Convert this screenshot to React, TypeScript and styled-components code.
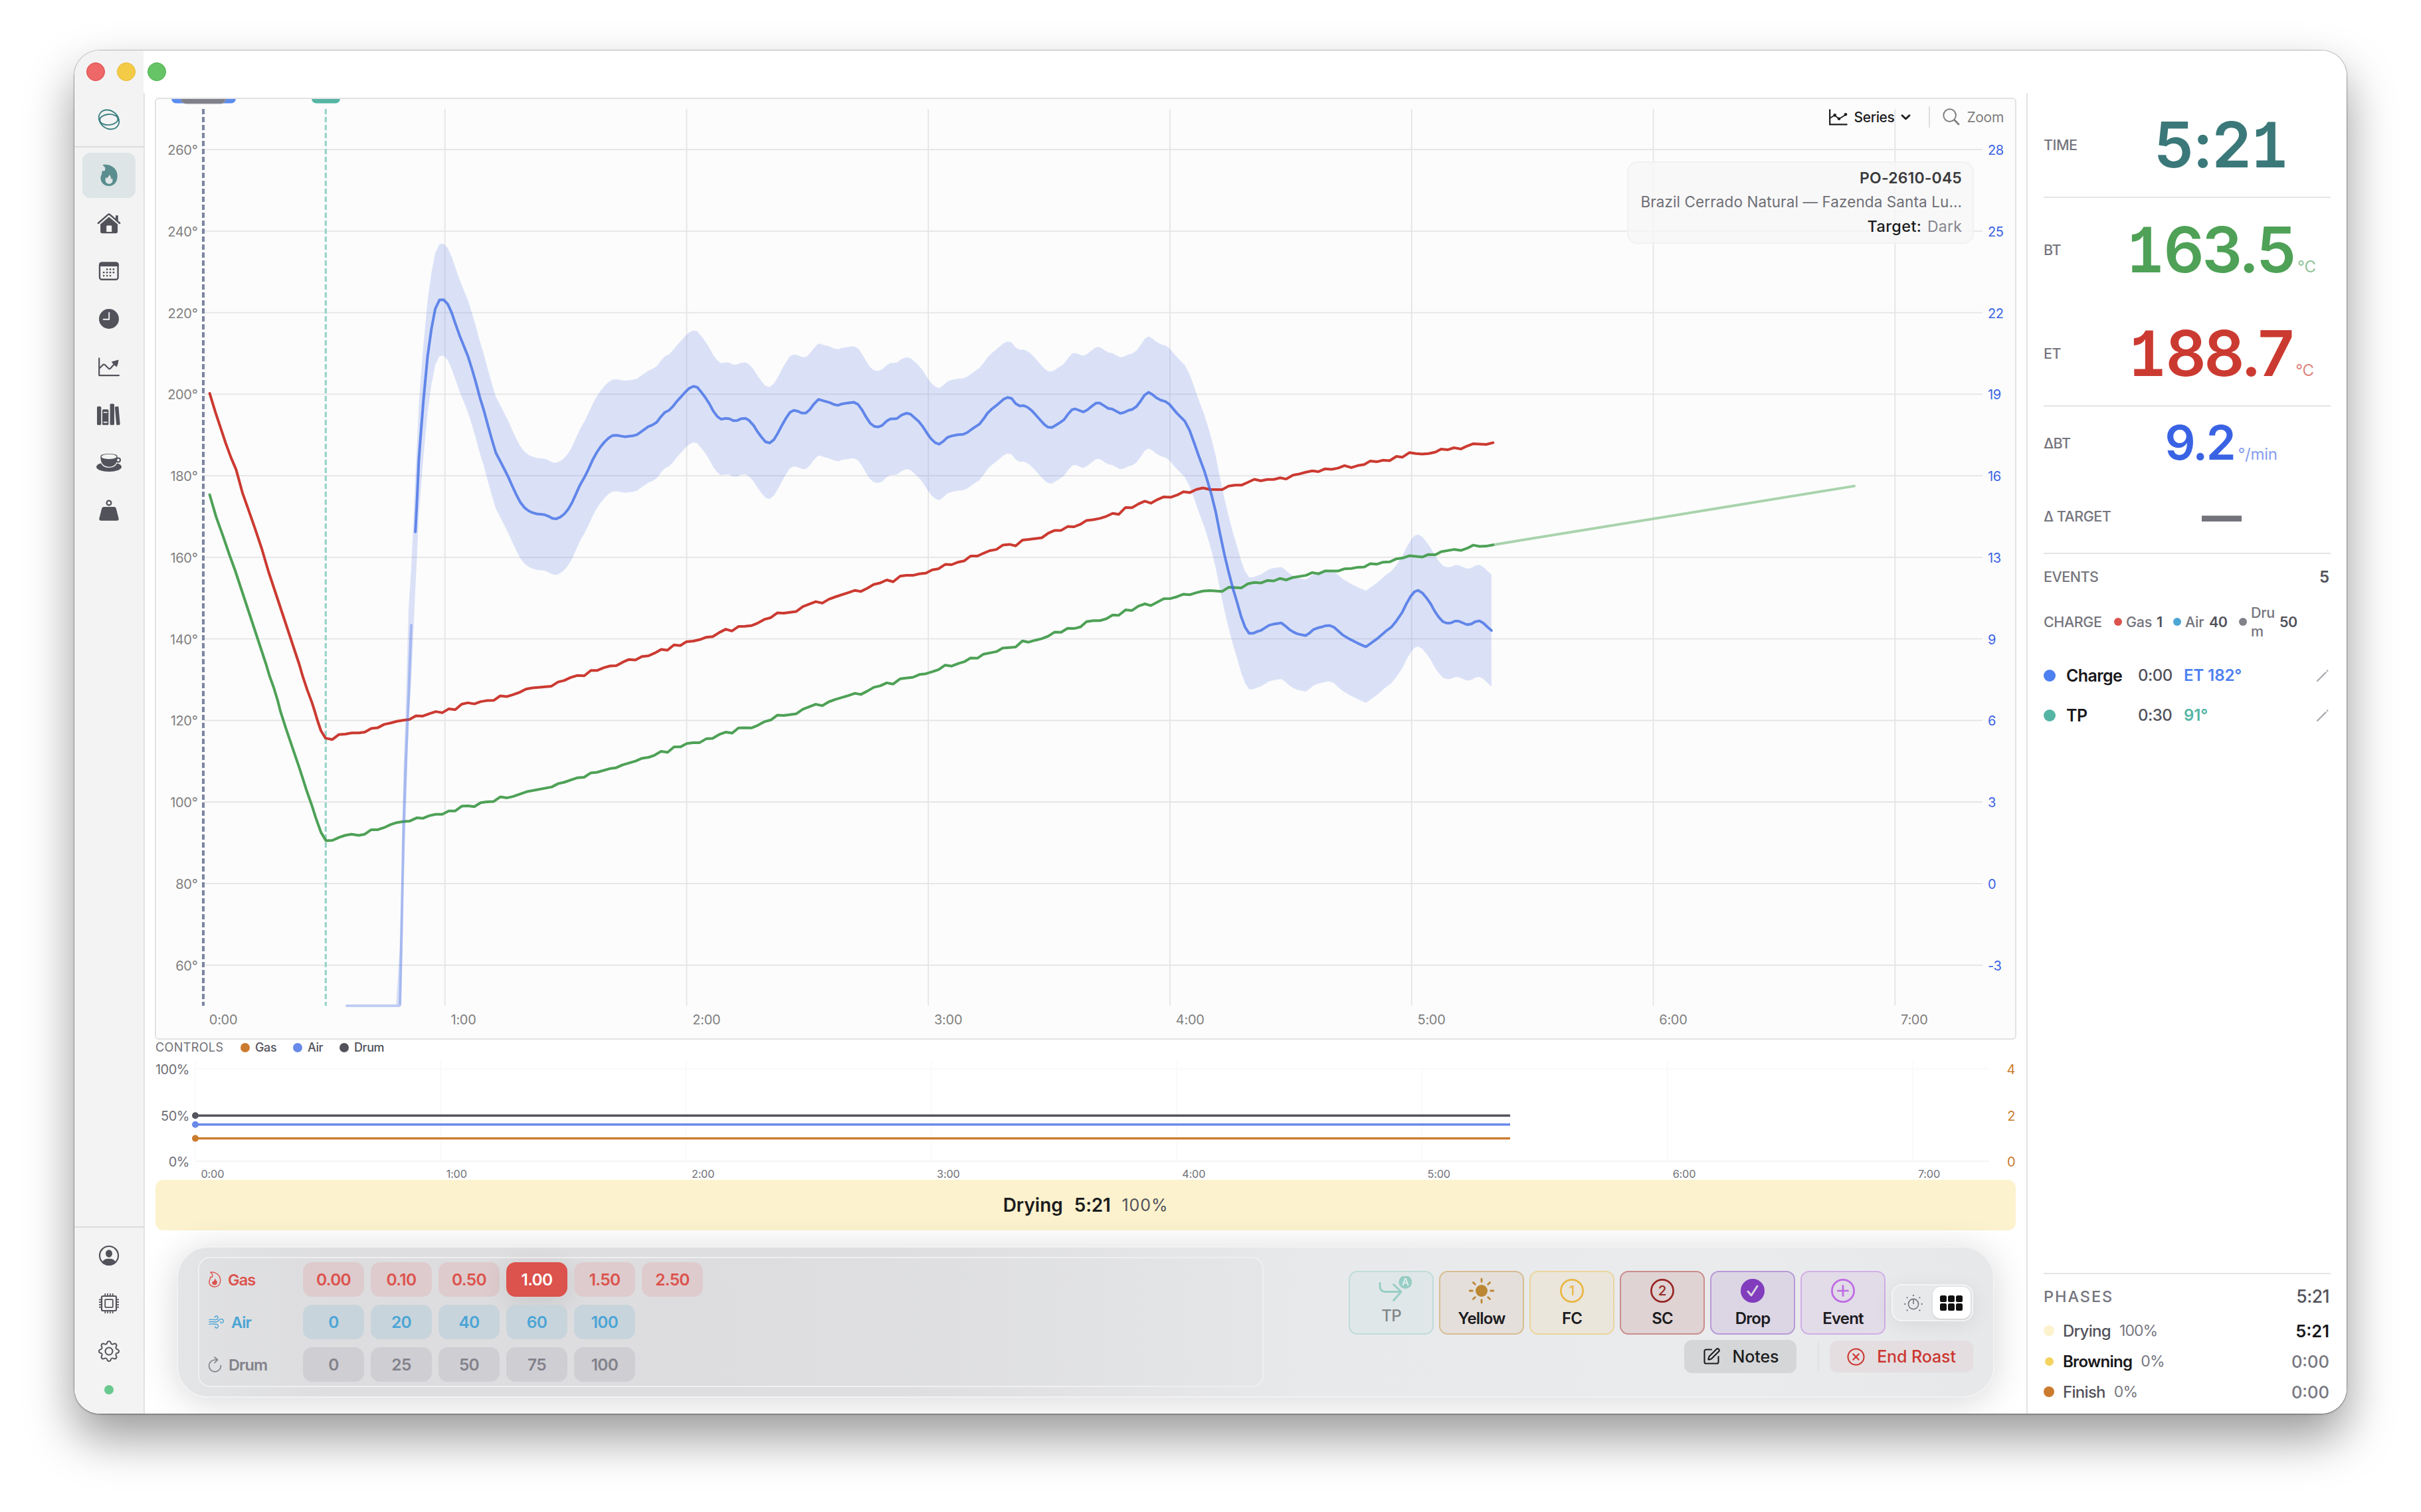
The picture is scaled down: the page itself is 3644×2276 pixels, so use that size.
import React from "react";
import styled, { createGlobalStyle } from "styled-components";
import { BsGear } from "react-icons/bs";
import { SquarePen } from "lucide-react";

const ui = `Inter, "Liberation Sans", sans-serif`;

const Global = createGlobalStyle`
  * { box-sizing: border-box; }
  body { margin: 0; background: #fff; font-family: ${ui}; color: #1c1c1e; overflow: hidden; }
  svg { display: block; }
  svg text { font-family: ${ui}; }
`;

/* ---------- window ---------- */
const Desktop = styled.div`
  width: 3644px;
  height: 2276px;
  padding: 76px 112px 0;
  background: #fff;
`;
const Window = styled.div`
  position: relative;
  display: flex;
  width: 3420px;
  height: 2052px;
  border-radius: 38px;
  overflow: hidden;
  background: #fff;
`;
const WindowShadow = styled.div`
  width: 3420px;
  border-radius: 38px;
  box-shadow: 0 0 0 1px rgba(0, 0, 0, 0.2), 0 1px 3px rgba(0, 0, 0, 0.3), 0 36px 72px rgba(0, 0, 0, 0.4);
`;
const Lights = styled.div`
  position: absolute;
  top: 18px;
  left: 18px;
  display: flex;
  gap: 18px;
`;
const Light = styled.i<{ $c: string; $b: string }>`
  width: 28px;
  height: 28px;
  border-radius: 50%;
  background: ${(p) => p.$c};
  border: 1px solid ${(p) => p.$b};
`;

/* ---------- sidebar ---------- */
const Side = styled.aside`
  display: flex;
  flex-direction: column;
  width: 106px;
`;
const SideCap = styled.div`
  width: 104px;
  height: 64px;
  background: #f3f3f3;
`;
const SideBody = styled.div`
  flex: 1;
  display: flex;
  flex-direction: column;
  background: #f3f3f3;
  border-right: 2px solid #e3e3e4;
`;
const Brand = styled.div`
  height: 82px;
  display: flex;
  align-items: center;
  justify-content: center;
  border-bottom: 2px solid #dcdcdd;
`;
const Nav = styled.nav`
  display: flex;
  flex-direction: column;
  align-items: center;
  gap: 4px;
  padding-top: 8px;
`;
const NavItem = styled.div<{ $on?: boolean }>`
  display: flex;
  align-items: center;
  justify-content: center;
  width: 80px;
  height: 68px;
  border-radius: 12px;
  color: ${(p) => (p.$on ? "#598d8e" : "#52525b")};
  background: ${(p) => (p.$on ? "#dde5e6" : "transparent")};
`;
const NavFoot = styled(Nav)`
  margin-top: auto;
  height: 282px;
  border-top: 2px solid #dcdcdd;
`;
const Status = styled.i`
  width: 14px;
  height: 14px;
  margin-top: 13px;
  border-radius: 50%;
  background: #68c98e;
`;

/* ---------- main ---------- */
const Main = styled.main`
  display: flex;
  flex-direction: column;
  width: 2832px;
  padding: 71px 15px 0;
`;
const Panel = styled.section`
  position: relative;
  height: 1418px;
  border: 2px solid #e3e3e3;
  border-radius: 6px;
  background: #fcfcfc;
  overflow: hidden;
`;
const Tools = styled.div`
  position: absolute;
  top: 11px;
  right: 17px;
  height: 32px;
  display: flex;
  align-items: center;
  font-size: 21px;
`;
const SeriesBtn = styled.div`
  display: flex;
  align-items: center;
  gap: 10px;
  padding-right: 27px;
  font-weight: 500;
  letter-spacing: -0.4px;
  color: #1c1c1e;
`;
const ZoomBtn = styled.div`
  display: flex;
  align-items: center;
  gap: 10px;
  height: 32px;
  padding-left: 19px;
  border-left: 2px solid #dedee0;
  letter-spacing: -0.3px;
  color: #7f7f7f;
`;
const OrderCard = styled.div`
  position: absolute;
  top: 94px;
  right: 62px;
  width: 522px;
  height: 124px;
  padding: 5px 16px;
  border: 2px solid #f1f1f2;
  border-radius: 16px;
  background: rgba(246, 246, 247, 0.82);
  text-align: right;
  line-height: 37px;
  white-space: nowrap;
`;
const OrderNo = styled.div`
  font-size: 23px;
  font-weight: 600;
  letter-spacing: 0.15px;
  line-height: 36px;
  color: #3a3a3c;
`;
const OrderName = styled.div`
  font-size: 22.5px;
  letter-spacing: 0.1px;
  line-height: 36px;
  color: #6e6e76;
`;
const OrderTarget = styled.div`
  font-size: 23.5px;
  font-weight: 500;
  letter-spacing: 0.4px;
  line-height: 38px;
  color: #1c1c1e;
  span { font-weight: 400; font-size: 23px; letter-spacing: 0.2px; color: #85858d; margin-left: 2px; }
`;

const Legend = styled.div`
  display: flex;
  align-items: center;
  height: 23px;
  font-size: 18px;
  font-weight: 500;
  color: #52525b;
`;
const LegendTitle = styled.span`
  width: 129px;
  padding-left: 1px;
  letter-spacing: 0.4px;
  color: #6f6f77;
  font-weight: 400;
`;
const LegendItem = styled.span<{ $c: string; $w: number }>`
  display: flex;
  align-items: center;
  gap: 8px;
  width: ${(p) => p.$w}px;
  letter-spacing: -0.4px;
  &::before { content: ""; width: 14px; height: 14px; border-radius: 50%; background: ${(p) => p.$c}; }
`;
const PhaseBar = styled.div`
  display: flex;
  align-items: center;
  justify-content: center;
  height: 76px;
  margin: 0 1px;
  border-radius: 12px;
  background: #fcf2cd;
  font-size: 28px;
  font-weight: 600;
  gap: 17px;
  b { font-weight: 600; letter-spacing: -0.3px; }
  small { font-size: 25px; font-weight: 400; letter-spacing: 0.9px; color: #52525b; }
`;

/* ---------- dock ---------- */
const Dock = styled.section`
  position: relative;
  display: flex;
  justify-content: space-between;
  height: 228px;
  margin: 24px 33px 0;
  padding: 14px 30px 0 30px;
  border: 2px solid #f2f2f3;
  border-radius: 48px;
  background: linear-gradient(90deg, #e3e5e7 0%, #dedee0 8%, #dedee0 40%, #e8e9eb 62%, #eaebed 85%, #e6e8ea 100%);
  box-shadow: 0 6px 54px rgba(0, 0, 0, 0.16);
`;
const Sliders = styled.div`
  display: flex;
  flex-direction: column;
  gap: 12px;
  width: 1604px;
  height: 196px;
  padding: 6px 14px;
  border: 2px solid #efeff0;
  border-radius: 18px;
  background: linear-gradient(90deg, rgba(221, 221, 223, 0.4), rgba(221, 221, 223, 0.9) 15%, rgba(221, 221, 223, 0.9) 50%, rgba(228, 229, 231, 0.7));
`;
const SliderRow = styled.div<{ $c: string }>`
  display: flex;
  align-items: center;
  gap: 10px;
  height: 52px;
  color: ${(p) => p.$c};
`;
const SliderName = styled.div`
  display: flex;
  align-items: center;
  gap: 10px;
  width: 132px;
  font-size: 23.5px;
  font-weight: 600;
  letter-spacing: -0.9px;
`;
const Chip = styled.div<{ $bg: string; $on?: boolean }>`
  display: flex;
  align-items: center;
  justify-content: center;
  width: 92px;
  height: 52px;
  border-radius: 14px;
  font-size: 24.5px;
  font-weight: 600;
  letter-spacing: -0.7px;
  background: ${(p) => (p.$on ? "#dc524c" : p.$bg)};
  color: ${(p) => (p.$on ? "#fff" : "inherit")};
  box-shadow: ${(p) => (p.$on ? "0 8px 40px rgba(0,0,0,.1)" : "none")};
`;
const Actions = styled.div`
  display: flex;
  flex-direction: column;
  gap: 8px;
  padding-top: 21px;
`;
const ActionRow = styled.div`
  display: flex;
  align-items: center;
  justify-content: flex-end;
`;
const EventBtn = styled.div<{ $bg: string; $b: string; $dim?: boolean }>`
  display: flex;
  flex-direction: column;
  align-items: center;
  width: 128px;
  height: 96px;
  margin-right: 8px;
  padding-top: 6px;
  border: 2px solid ${(p) => p.$b};
  border-radius: 13px;
  background: ${(p) => p.$bg};
  font-size: 24px;
  font-weight: ${(p) => (p.$dim ? 500 : 600)};
  line-height: ${(p) => (p.$dim ? 31 : 39)}px;
  letter-spacing: -0.8px;
  color: ${(p) => (p.$dim ? "#808588" : "#1c1c1e")};
`;
const Toggle = styled.div`
  display: flex;
  width: 123px;
  height: 56px;
  margin-left: 1px;
  padding: 2px;
  border: 2px solid #f4f4f5;
  border-radius: 16px;
  box-shadow: 0 6px 30px rgba(0, 0, 0, 0.07);
`;
const ToggleCell = styled.div<{ $on?: boolean }>`
  display: flex;
  align-items: center;
  justify-content: center;
  width: 58px;
  height: 48px;
  border-radius: 12px;
  background: ${(p) => (p.$on ? "#fff" : "transparent")};
  box-shadow: ${(p) => (p.$on ? "0 1px 3px rgba(0,0,0,.15)" : "none")};
`;
const Knobs = styled.div`
  display: grid;
  grid-template-columns: repeat(3, 10px);
  gap: 2px;
  i { height: 10.5px; border-radius: 2.5px; background: #111; }
`;
const TextBtn = styled.div<{ $bg: string; $c: string; $w: number; $h: number }>`
  display: flex;
  align-items: center;
  justify-content: center;
  gap: 18px;
  width: ${(p) => p.$w}px;
  height: ${(p) => p.$h}px;
  border-radius: 12px;
  background: ${(p) => p.$bg};
  color: ${(p) => p.$c};
  font-size: 25px;
  font-weight: 500;
  letter-spacing: -0.1px;
  white-space: nowrap;
`;
const Rule = styled.i`
  width: 2px;
  height: 44px;
  margin: 0 16px 0 32px;
  background: #e0e1e3;
`;

/* ---------- readouts ---------- */
const Readouts = styled.aside`
  width: 482px;
  padding-top: 64px;
  display: flex;
`;
const ReadBody = styled.div`
  flex: 1;
  display: flex;
  flex-direction: column;
  padding: 0 24px;
  border-left: 2px solid #e3e3e4;
`;
const Group = styled.div<{ $h: number }>`
  height: ${(p) => p.$h}px;
  border-bottom: 2px solid #e4e4e6;
`;
const Reading = styled.div<{ $h: number }>`
  display: flex;
  align-items: center;
  height: ${(p) => p.$h}px;
`;
const Cap = styled.span`
  width: 104px;
  font-size: 21.5px;
  font-weight: 500;
  letter-spacing: -0.5px;
  color: #75757d;
  white-space: nowrap;
`;
const ValueBox = styled.div<{ $c: string; $size: number; $track?: number }>`
  flex: 1;
  display: flex;
  align-items: baseline;
  justify-content: center;
  padding: 0 2px 2px 0;
  font-size: ${(p) => p.$size}px;
  line-height: 1;
  font-weight: 600;
  letter-spacing: ${(p) => p.$track ?? -0.032}em;
  color: ${(p) => p.$c};
  small { font-size: 24px; font-weight: 400; letter-spacing: -0.3px; opacity: 0.62; margin-left: 5px; }
`;
const SlabOne = styled.span`
  display: inline-block;
  font-family: "Liberation Mono", monospace;
  font-weight: 700;
  font-size: 1.09em;
  line-height: 0;
  letter-spacing: 0;
  margin: 0 -0.03em 0 -0.025em;
  transform: scaleX(0.84);
`;
const HeadRow = styled.div<{ $h: number }>`
  display: flex;
  align-items: center;
  justify-content: space-between;
  height: ${(p) => p.$h}px;
  padding-right: 2px;
  font-size: 24px;
  font-weight: 600;
  color: #52525b;
`;
const ChargeRow = styled.div`
  display: flex;
  align-items: center;
  height: 66px;
  padding-top: 2px;
  font-size: 21.5px;
  color: #75757d;
  letter-spacing: -0.3px;
  margin-bottom: 18px;
`;
const ChargeCap = styled.span`
  width: 106px;
  font-weight: 500;
  font-size: 21.5px;
  letter-spacing: -0.4px;
`;
const Setting = styled.span<{ $c: string; $w: number; $t: number }>`
  display: flex;
  align-items: center;
  width: ${(p) => p.$w}px;
  line-height: 28px;
  font-weight: 500;
  &::before { content: ""; flex: none; width: 12px; height: 12px; margin-right: 6px; border-radius: 50%; background: ${(p) => p.$c}; }
  span { width: ${(p) => p.$t}px; word-break: break-all; }
  b { font-weight: 600; letter-spacing: -0.6px; color: #52525b; }
`;
const EventRow = styled.div<{ $c: string }>`
  display: flex;
  align-items: center;
  height: 60px;
  padding: 1px 3px 0 0;
  font-size: 24px;
  &::before { content: ""; width: 18px; height: 18px; margin-right: 16px; border-radius: 50%; background: ${(p) => p.$c}; }
  b { width: 108px; font-size: 25px; font-weight: 600; letter-spacing: -0.6px; color: #18181b; }
  span { width: 69px; font-weight: 500; letter-spacing: -0.5px; color: #52525b; }
  em { flex: 1; font-style: normal; font-weight: 600; letter-spacing: -0.1px; color: ${(p) => p.$c}; }
`;
const Phases = styled.div`
  margin-top: auto;
  height: 212px;
  border-top: 2px solid #e4e4e6;
`;
const PhaseHead = styled(HeadRow)`
  padding-top: 4px;
`;
const PhaseCap = styled.span`
  font-size: 23.5px;
  font-weight: 500;
  letter-spacing: 1.9px;
  color: #75757d;
`;
const PhaseTotal = styled.span`
  font-size: 26.5px;
  font-weight: 500;
  letter-spacing: -0.5px;
`;
const PhaseRow = styled.div<{ $c: string; $d: number; $on?: boolean; $lead?: boolean }>`
  display: flex;
  align-items: center;
  height: 46px;
  padding-right: 2px;
  font-size: 24px;
  &::before {
    content: "";
    width: ${(p) => p.$d}px;
    height: ${(p) => p.$d}px;
    margin: 0 ${(p) => 13 + (16 - p.$d) / 2}px 0 ${(p) => (16 - p.$d) / 2}px;
    border-radius: 50%;
    background: ${(p) => p.$c};
  }
  b { font-weight: ${(p) => (p.$on ? 600 : 500)}; letter-spacing: -0.7px; color: ${(p) => (p.$on ? "#18181b" : "#52525b")}; }
  span { flex: 1; margin-left: 13px; font-size: 23px; letter-spacing: -0.9px; color: #77777f; }
  em { font-style: normal; font-size: 25.5px; font-weight: ${(p) => (p.$lead ? 600 : 500)}; letter-spacing: 0; color: ${(p) => (p.$lead ? "#18181b" : "#77777f")}; }
`;

/* ---------- series data ---------- */
type Tile = { ox: number; oy: number; sx: number; sy: number; d: string };
type Pt = [number, number];
const A = { ox: 100, oy: 60, sx: 2.24, sy: 1.96 };
const B = { ox: 230, oy: 1000, sx: 1.7422, sy: 2.8 };
const C = { ox: 480, oy: 340, sx: 1.7422, sy: 2.24 };
const D = { ox: 1350, oy: 480, sx: 1.6505, sy: 2.6133 };

const decode = (tiles: Tile[]): Pt[] =>
  tiles.flatMap((t) =>
    t.d.trim().split(/\s+/).map((p) => {
      const [x, y] = p.split(",").map(Number);
      return [t.ox + x / t.sx, t.oy + y / t.sy] as Pt;
    })
  );
const poly = (pts: Pt[]) => pts.map(([x, y]) => `${x.toFixed(1)},${y.toFixed(1)}`).join(" ");

const et = decode([
  { ...A, d: "483,1043 502,1098 520,1145 537,1190 555,1233 572,1268 583,1303 594,1338 612,1382 635,1440 658,1500 681,1568" },
  { ...B, d: "384,0 393,50 405,108 417,160 424,195 432,238 441,280 453,311 471,317 488,296 505,294 522,289 540,289 556,286 573,270 590,267 607,253 624,247 640,240 656,236 673,232 690,217 708,218 725,208 742,199 759,204 776,188 793,191 810,168 826,162 843,167 860,157 876,153 894,152 911,133 928,136 945,128 962,118" },
  { ...C, d: "543,1562 560,1558 610,1552 627,1538 643,1533 660,1523 677,1516 696,1517 713,1499 730,1499 747,1490 763,1484 780,1483 797,1471 813,1462 830,1464 847,1452 864,1450 881,1440 898,1428 914,1431 931,1413 948,1415 964,1402 982,1400 999,1395 1016,1387 1033,1385 1050,1371 1067,1360 1083,1366 1100,1351 1117,1350 1134,1348 1151,1339 1168,1327 1185,1321 1202,1305 1219,1306 1235,1303 1252,1300 1269,1284 1287,1275 1303,1267 1320,1272 1337,1259 1354,1251 1388,1237 1406,1229 1421,1233 1438,1222 1455,1209 1472,1204 1489,1194 1506,1200" },
  { ...D, d: "8,1012 24,1009 40,1009 56,1003 72,1000 88,987 103,983 120,966 136,967 152,957 167,952 183,933 200,933 215,922 230,912 247,907 263,890 280,887 295,893 312,870 327,868 360,861 376,843 392,832 408,832 424,817 440,818 456,808 471,793 488,790 504,785 520,777 536,765 551,769 568,742 584,743 600,728 616,717 631,725 647,711 663,700 680,702 696,693 712,680 728,683 744,671 760,665 777,671 808,672 824,658 840,654 856,654 872,643 888,631 904,637 920,632 936,632 952,625 967,630 984,615 1000,610 1016,603 1032,598 1047,601 1063,590 1080,592 1096,587 1112,577 1129,585 1145,577 1161,573 1176,559 1192,562 1208,556 1224,558 1241,541 1256,544 1273,526 1289,530 1305,532 1321,530 1338,524 1352,512 1368,515 1384,507 1401,512 1417,500 1432,491 1464,494 1481,487" },
]);
const bt = decode([
  { ...A, d: "483,1342 505,1408 527,1462 549,1518 569,1566" },
  { ...B, d: "297,0 306,48 317,98 327,150 335,200 350,275 367,355 385,440 403,530 417,595 427,645 441,708 454,743 471,742 488,730 504,721 521,716 540,721 556,716 573,697 590,697 607,688 624,675 640,667 656,663 673,661 692,647 708,649 725,638 742,632 759,632 776,618 793,618 810,598 826,596 843,600 860,583 876,580 894,578 911,559 928,563 945,557 980,537 1046,517 1063,503 1079,497 1114,478 1131,476 1148,458 1165,455 1198,440 1215,436 1232,424 1266,408 1283,396 1300,392 1315,384 1333,367 1350,371 1367,348 1384,348 1400,334 1416,330 1434,330 1451,314 1468,312 1485,296 1502,286 1519,290 1536,268 1553,267" },
  { ...C, d: "1134,1693 1151,1684 1168,1672 1185,1666 1202,1650 1219,1651 1235,1648 1252,1645 1269,1630 1287,1621 1303,1613 1320,1618 1337,1605 1354,1597 1388,1584 1406,1576 1421,1580 1438,1569 1455,1556 1472,1551 1489,1541 1506,1545" },
  { ...D, d: "8,1416 40,1410 56,1399 72,1396 88,1388 103,1380 120,1362 136,1366 152,1356 167,1349 183,1334 200,1335 215,1319 247,1309 263,1295 295,1291 312,1267 327,1272 344,1264 360,1258 376,1248 392,1232 408,1233 424,1217 440,1218 456,1212 471,1191 488,1187 504,1187 520,1180 536,1165 551,1166 568,1145 584,1147 600,1130 616,1121 631,1128 663,1101 680,1100 696,1093 712,1083 728,1085 744,1077 760,1071 777,1069 808,1072 824,1056 856,1058 872,1042 888,1037 904,1039 920,1029 936,1031 952,1021 967,1027 984,1017 1016,1009 1032,998 1047,1003 1063,992 1096,992 1112,983 1129,982 1145,977 1161,976 1176,963 1192,965 1208,957 1224,956 1241,944 1256,941 1273,932 1305,937 1320,927 1338,928 1352,916 1384,907 1401,911 1417,902 1432,890 1448,895 1464,894 1481,889" },
]);
const ror = decode([
  { ...C, d: "253,1032 258,905 262,790 266,720 274,590 285,440 295,348 305,280 316,250 327,249 338,264 348,292 358,330 369,370 380,405 391,440 402,485 412,530 422,578 432,620 443,672 453,718 464,765 475,792 487,822 497,848 507,877 517,905 528,932 539,950 550,961 560,967 571,971 592,974 602,979 612,986 622,988 633,982 644,971 654,955 664,933 674,904 685,873 697,846 707,820 718,789 728,765 739,744 750,727 760,715 770,707 781,706 802,711 823,708 834,704 844,695 864,677 875,671 886,662 896,645 907,629 918,622 928,609 939,591 952,573 961,560 971,548 982,541 992,544 1003,561 1013,578 1024,600 1034,624 1045,643 1055,652 1066,649 1076,650 1087,657 1097,656 1108,650 1119,649 1129,657 1140,673 1150,694 1161,713 1171,728 1182,732 1193,721 1203,700 1214,673 1224,650 1235,629 1245,622 1256,625 1266,631 1277,631 1287,620 1298,601 1310,585 1340,596 1350,602 1361,605 1372,600 1382,598 1403,595 1414,602 1424,620 1435,645 1446,666 1456,676 1467,678 1477,673 1489,658 1499,651 1509,651" },
  { ...D, d: "0,392 12,378 24,371 34,375 44,389 54,403 64,423 75,450 85,472 95,487 105,493 115,482 125,467 135,461 150,456 165,454 175,447 187,433 205,414 215,394 225,371 236,354 246,342 265,316 275,309 285,313 295,333 305,342 315,341 325,348 335,361 345,378 355,396 366,415 375,426 385,427 395,418 405,408 415,397 425,375 435,357 443,354 463,366 473,358 484,344 495,331 504,331 515,342 525,352 535,355 555,372 565,368 575,360 585,356 595,345 605,324 615,300 625,289 635,298 645,311 656,320 667,325 677,336 695,370 715,402 727,438 739,490 750,540 763,595 772,640 782,695 792,760 802,840 814,930 824,995 835,1062 845,1115 855,1170 865,1213 875,1237 885,1237 895,1230 905,1225 915,1215 925,1205 935,1201 955,1196 965,1208 975,1222 985,1232 995,1239 1015,1246 1025,1236 1035,1222 1045,1216 1055,1212 1065,1207 1075,1206 1085,1212 1095,1226 1107,1243 1125,1260 1145,1276 1165,1290 1175,1279 1195,1256 1215,1228 1228,1213 1240,1190 1255,1155 1267,1117 1277,1090 1286,1073 1295,1068 1306,1079 1316,1098 1326,1121 1336,1150 1346,1173 1356,1191 1366,1197 1376,1196 1386,1189 1396,1189 1407,1197 1417,1203 1427,1200 1437,1191 1447,1188 1457,1197 1467,1212 1477,1226" },
]);
const rorWarmup: Pt[] = [[601.5, 1514], [604.5, 1400], [607.5, 1240], [611, 1143], [615, 1000], [619, 940]];
const rorAll: Pt[] = [[596, 1598], ...rorWarmup, ...ror];
const SPREAD = 84.3;
const band: Pt[] = [
  ...rorAll.map(([x, y]) => [x, y - SPREAD] as Pt),
  ...rorAll.map(([x, y]) => [x, y + SPREAD] as Pt).reverse(),
];

/* ---------- main chart ---------- */
const yT = (t: number) => 1452.8 + (60 - t) * 6.1385;
const xM = (m: number) => 306 + m * 363.75;
const temps = [260, 240, 220, 200, 180, 160, 140, 120, 100, 80, 60];
const rates = [28, 25, 22, 19, 16, 13, 9, 6, 3, 0, -3];
const minutes = [0, 1, 2, 3, 4, 5, 6, 7];

const RoastChart = () => (
  <svg width="2798" height="1414" viewBox="235 149 2798 1414">
    <defs>
      <clipPath id="plot"><rect x="306" y="163" width="2678" height="1351" /></clipPath>
    </defs>
    <g stroke="#e5e5e6" strokeWidth="1.8">
      {temps.map((t) => <line key={t} x1="306" x2="2984" y1={yT(t)} y2={yT(t)} />)}
      {minutes.slice(1).map((m) => <line key={m} x1={xM(m)} x2={xM(m)} y1="164" y2="1514" />)}
    </g>
    <polygon points={poly(band)} fill="#4169e1" fillOpacity="0.18" clipPath="url(#plot)" />
    <line x1="306" x2="306" y1="164" y2="1514" stroke="#7b86a0" strokeWidth="4" strokeDasharray="8 4" />
    <line x1="490.3" x2="490.3" y1="164" y2="1514" stroke="#97d3c9" strokeWidth="3.2" strokeDasharray="8 4" />
    <g fill="none" strokeLinejoin="round" strokeLinecap="round" strokeWidth="4">
      <line x1="2247" y1="820.2" x2="2791" y2="731.6" stroke="#a9d3ad" />
      <polyline points={poly(et)} stroke="#cb3a31" />
      <polyline points={poly(bt)} stroke="#4ea156" />
      <polyline points={poly(ror)} stroke="#3f6be6" strokeOpacity="0.78" />
      <polyline points={poly([[602, 1512], ...rorWarmup.slice(1, 4), [615, 1050], [619, 941]])} stroke="#4169e1" strokeOpacity="0.34" />
      <line x1="522" x2="601" y1="1514" y2="1514" stroke="#bfcdf4" />
    </g>
    <rect x="258" y="135" width="97" height="20.5" rx="7" fill="#5b8def" />
    <rect x="272" y="135" width="68" height="21" rx="8" fill="#80808a" stroke="#9c9ca6" strokeWidth="1" />
    <rect x="469" y="135" width="43" height="20.5" rx="7" fill="#55b5a5" />
    <g fontSize="20" fill="#808080" letterSpacing="-0.3">
      {temps.map((t) => <text key={t} x="297.5" y={yT(t) + 8} textAnchor="end">{t}°</text>)}
      {minutes.map((m) => <text key={m} x={xM(m) + 8.8} y="1542">{m}:00</text>)}
    </g>
    <g fontSize="20" fill="#3a63e4" letterSpacing="-0.4">
      {rates.map((r, i) => <text key={r} x="2992" y={yT(temps[i]) + 8}>{r}</text>)}
    </g>
  </svg>
);

const ControlsChart = () => {
  const rows: [number, string, string][] = [[1609, "100%", "4"], [1679, "50%", "2"], [1748, "0%", "0"]];
  const lines: [number, string][] = [[1679.3, "#55555d"], [1692.7, "#698aea"], [1713.6, "#cb7b2e"]];
  return (
    <svg width="2802" height="188" viewBox="233 1588 2802 188">
      <g stroke="#f9f9fa" strokeWidth="1.5">
        <line x1="294" x2="2994" y1="1609" y2="1609" />
        <line x1="294" x2="2994" y1="1748" y2="1748" stroke="#f0f0f1" />
        {minutes.map((m) => <line key={m} x1={294 + m * 369.3} x2={294 + m * 369.3} y1="1596" y2="1748" />)}
      </g>
      {lines.map(([y, c]) => (
        <g key={c}>
          <line x1="294" x2="2273" y1={y} y2={y} stroke={c} strokeWidth="3.4" />
          <circle cx="294" cy={y} r="5" fill={c} />
        </g>
      ))}
      <g fontSize="20" letterSpacing="-0.5">
        {rows.map(([y, l, r]) => (
          <React.Fragment key={l}>
            <text x="285" y={y + 8} textAnchor="end" fill="#6f6f77">{l}</text>
            <text x="3033" y={y + 8} textAnchor="end" fill="#cb7b2e">{r}</text>
          </React.Fragment>
        ))}
      </g>
      <g fontSize="16.3" letterSpacing="-0.2" fill="#6f6f77">
        {minutes.map((m) => <text key={m} x={302.5 + m * 369.2} y="1773">{m}:00</text>)}
      </g>
    </svg>
  );
};

/* ---------- icons ---------- */
const Glyph = ({ children, size = 40 }: { children: React.ReactNode; size?: number }) => (
  <svg width={size} height={size} viewBox="0 0 40 40" fill="none">{children}</svg>
);
const LogoIcon = () => (
  <Glyph>
    <g stroke="#3b7f80" strokeWidth="1.9">
      <ellipse cx="20" cy="20" rx="16.3" ry="13.2" transform="rotate(38 20 20)" />
      <ellipse cx="19.8" cy="20" rx="13.6" ry="8.1" transform="rotate(-4 20 20)" />
    </g>
  </Glyph>
);
const FlameIcon = () => (
  <Glyph>
    <path fill="currentColor" fillRule="evenodd" d="M11.5 3.9C20 2.6 32.7 7.6 32.7 20.8C32.7 29.8 28 36 20 36C12.3 36 7.4 30.6 7.4 23.6C7.4 20.6 9.6 18.5 9.3 15.6C9.2 14.4 10 13.2 11 12.7C11.6 14 12.6 13.9 13.3 13.2C14.9 11 15.3 7.4 11.3 5.4C10.6 5 10.7 4 11.5 3.9ZM20.6 19C20.5 21.5 17.7 22.7 16.7 24.5C16 23.6 16 23.2 15.6 23C13.6 26 14 32.6 20.2 32.9C25.6 32.8 26.6 27.4 24.6 24.2C24 25 23.6 25.4 23 25.5C23 23 22.6 20.6 20.6 19Z" />
  </Glyph>
);
const HouseIcon = () => (
  <Glyph>
    <path d="M3.8 20 18.8 6.9Q20 6 21.2 6.9L36.2 20" stroke="currentColor" strokeWidth="2.5" strokeLinecap="round" />
    <path d="M30 8.2h3.8v8.6L30 13.5z" fill="currentColor" />
    <path fillRule="evenodd" d="M20 10.4 33.1 21.6V32.5Q33.1 35.3 30.3 35.3H9.9Q7.1 35.3 7.1 32.5V21.6ZM16.2 24.6V33H24.2V24.6Q24.2 23.6 23.2 23.6H17.2Q16.2 23.6 16.2 24.6Z" fill="currentColor" />
  </Glyph>
);
const CalendarIcon = () => (
  <Glyph>
    <rect x="6" y="7.8" width="27.6" height="25" rx="3.4" stroke="currentColor" strokeWidth="2.4" />
    <path d="M5 13V10.4Q5 6.6 8.8 6.6H31Q34.8 6.6 34.8 10.4V13z" fill="currentColor" />
    {[[17.1, 17.4], [22, 17.4], [26.9, 17.4], [12.2, 22.2], [17.1, 22.2], [22, 22.2], [26.9, 22.2], [12.2, 27.1], [17.1, 27.1], [22, 27.1]].map(([x, y]) => (
      <circle key={`${x}-${y}`} cx={x} cy={y} r="1.35" fill="currentColor" />
    ))}
  </Glyph>
);
const ClockIcon = () => (
  <Glyph>
    <circle cx="20" cy="20" r="15" fill="currentColor" />
    <path d="M20.2 10.8V20.8H11.8" stroke="#f3f3f3" strokeWidth="1.9" strokeLinecap="round" strokeLinejoin="round" />
  </Glyph>
);
const TrendIcon = () => (
  <Glyph>
    <path d="M5.2 7.4V33.1H35M5.6 22.6 10.6 17.4Q12.3 15.8 14 17.3L19.6 22.8Q20.8 23.8 22 22.7L28.6 15.4" stroke="currentColor" strokeWidth="2.2" strokeLinecap="round" strokeLinejoin="round" />
    <path d="M34.6 9.6 23.8 12.4Q25.6 15.6 31.7 20.6Q34 16 34.6 9.6Z" fill="currentColor" />
  </Glyph>
);
const BooksIcon = () => (
  <Glyph>
    <g fill="currentColor">
      <rect x="2" y="7.8" width="6.3" height="28" rx="1.6" />
      <rect x="10" y="12.3" width="9.4" height="23.5" rx="1.6" />
      <rect x="21.6" y="3.7" width="6.4" height="32.1" rx="1.6" />
      <rect x="30" y="7.8" width="5.6" height="28" rx="1.6" transform="rotate(-5 32.8 21.8)" />
    </g>
    <path d="M12.3 16.8h4.8M12.3 31.6h4.8" stroke="#f3f3f3" strokeWidth="1.6" strokeLinecap="round" />
  </Glyph>
);
const CupIcon = () => (
  <Glyph>
    <ellipse cx="20" cy="26.8" rx="19" ry="7.2" fill="currentColor" />
    <path d="M6.6 11C6.6 4.6 33.4 4.6 33.4 11C33.4 22 28.5 27.4 20 27.4S6.6 22 6.6 11Z" fill="currentColor" stroke="#f3f3f3" strokeWidth="1.4" />
    <ellipse cx="20" cy="11.4" rx="11.4" ry="3.7" fill="#f3f3f3" />
    <circle cx="34" cy="16.4" r="3" stroke="currentColor" strokeWidth="2" />
  </Glyph>
);
const WeightIcon = () => (
  <Glyph>
    <circle cx="20" cy="9" r="3.4" stroke="currentColor" strokeWidth="2.2" />
    <path d="M12.4 14.9H27.6Q30 14.9 30.7 17.2L34.6 32.2Q35.3 35.8 31.6 35.8H8.4Q4.7 35.8 5.4 32.2L9.3 17.2Q10 14.9 12.4 14.9Z" fill="currentColor" />
  </Glyph>
);
const UserIcon = () => (
  <Glyph>
    <circle cx="20" cy="20" r="14" stroke="currentColor" strokeWidth="2.2" />
    <ellipse cx="20" cy="17" rx="5" ry="5.8" fill="currentColor" />
    <path d="M10.2 30.2C12 25.6 15 24.8 20 24.8S28 25.6 29.8 30.2C27 33 24 34 20 34S13 33 10.2 30.2Z" fill="currentColor" />
  </Glyph>
);
const CpuIcon = () => (
  <Glyph>
    <g stroke="currentColor" strokeWidth="2.2">
      <rect x="9" y="9" width="22" height="22" rx="2" />
      <rect x="14.2" y="14.2" width="11.6" height="11.6" rx="0.8" strokeWidth="1.8" />
      <path d="M14.3 5v4M18.1 5v4M21.9 5v4M25.7 5v4M14.3 31v4M18.1 31v4M21.9 31v4M25.7 31v4M5 14.3h4M5 18.1h4M5 21.9h4M5 25.7h4M31 14.3h4M31 18.1h4M31 21.9h4M31 25.7h4" strokeWidth="1.7" />
    </g>
  </Glyph>
);
const SeriesIcon = () => (
  <svg width="28" height="25" viewBox="0 0 28 25" fill="none" stroke="#1c1c1e">
    <path d="M1.2 .5V23.3H27.5" strokeWidth="2.2" />
    <path d="M2 13.5 8.5 9.5 15 15 25.4 8.5" strokeWidth="1.8" />
    <g fill="#1c1c1e" stroke="none"><circle cx="8.7" cy="9.4" r="2.3" /><circle cx="15" cy="14.8" r="2.3" /><circle cx="25" cy="8.2" r="2.3" /></g>
  </svg>
);
const Chevron = () => (
  <svg width="15" height="9" viewBox="0 0 15 9" fill="none" stroke="#1c1c1e" strokeWidth="2.8" strokeLinecap="round" strokeLinejoin="round"><path d="M2 1.8 7.5 7 13 1.8" /></svg>
);
const Lens = () => (
  <svg width="26" height="26" viewBox="0 0 26 26" fill="none" stroke="#7f7f7f" strokeLinecap="round"><circle cx="10.6" cy="10.6" r="9.3" strokeWidth="2" /><path d="M17.8 17.8 24 24" strokeWidth="2.8" /></svg>
);
const GasIcon = () => (
  <svg width="19" height="24" viewBox="0 0 19 24" fill="none" stroke="currentColor" strokeWidth="1.4" strokeLinejoin="round">
    <path d="M3 .9C11 .6 17.7 5.4 17.7 13.6C17.7 19.4 14.2 23 9 23C4 23 .8 19.8 .8 15.6C.8 13.6 2.6 11.8 2.4 9.6C2.3 8.4 2.9 8.2 3.4 8C3.6 9.2 4.6 9.2 5.2 8.2C6.6 6.2 5.6 3 3.2 1.7Z" />
    <path d="M9.4 10.6C11 12 11.2 13 11.4 14.2L12.2 13.6C13.6 16.8 12.8 20.2 9.2 20.3C5.6 20.2 4.6 17.4 5.8 15C6 14.6 6.3 14.7 6.6 15.4C8 13.8 9.6 12.8 9.4 10.6Z" fill="currentColor" stroke="none" />
  </svg>
);
const WindIcon = () => (
  <svg width="24" height="20" viewBox="0 0 24 20" fill="none" stroke="currentColor" strokeWidth="1.4" strokeLinecap="round">
    <path d="M1 6.7C5 5.1 8 7.2 11 6.6C15.2 5.6 14.8 1 11.8 1C10.3 1 9.4 1.9 9.6 3.1" />
    <path d="M1 10.1C5.5 8.5 8 10.4 12 9.9C15.2 9.4 15.6 5.4 18.8 5.4C23.6 5.6 23.2 11.6 19.4 11.2C18.2 11 17.7 10.3 17.8 9.4" />
    <path d="M1 13.5C5 11.9 8 13.6 11 13.1C15.4 13.2 15.2 19 12 19C10.5 19 9.7 18.1 9.8 17" />
  </svg>
);
const TurnIcon = () => (
  <svg width="20" height="24" viewBox="0 0 20 24" fill="none" stroke="currentColor" strokeWidth="1.7" strokeLinecap="round" strokeLinejoin="round">
    <path d="M18.4 13.6A8.9 8.9 0 1 1 9.5 5H13.2" />
    <path d="M9 1 13.6 5 9 9.4" />
  </svg>
);
const TpIcon = () => (
  <svg width="62" height="44" viewBox="-1 0 62 44" fill="none">
    <path d="M14 9.5V14Q14 22.5 22.5 22.5H45M34.5 11.5 46 22.5 34.5 35.5" stroke="#97cdc4" strokeWidth="2.9" strokeLinecap="round" strokeLinejoin="round" transform="translate(-1 1)" />
    <circle cx="51.3" cy="9" r="10" fill="#97cdc4" />
    <text x="51.3" y="14.4" textAnchor="middle" fontSize="15" fontWeight="500" letterSpacing="0" fill="#e8f1f1">A</text>
  </svg>
);
const SunIcon = () => (
  <svg width="44" height="44" viewBox="-22 -22 44 44">
    <circle r="9" fill="#bb8732" />
    {[0, 45, 90, 135, 180, 225, 270, 315].map((a) => (
      <line key={a} y1="-13.6" y2="-17.8" stroke="#bb8732" strokeWidth="2.8" strokeLinecap="round" transform={`rotate(${a})`} />
    ))}
  </svg>
);
const Ring = ({ c, label }: { c: string; label?: string }) => (
  <svg width="44" height="44" viewBox="-22 -22 44 44" fill="none" stroke={c} strokeWidth="2.7">
    <circle r="16.6" />
    {label ? (
      <text y="7.4" textAnchor="middle" fontSize="20.5" fontWeight="500" letterSpacing="0" fill={c} stroke="none">{label}</text>
    ) : (
      <path d="M0-7.6V7.6M-7.6 0H7.6" strokeLinecap="round" />
    )}
  </svg>
);
const CheckDisc = () => (
  <svg width="44" height="44" viewBox="-22 -22 44 44" fill="none">
    <circle r="18" fill="#813dbd" />
    <path d="M-7 1 -2 7 7-7" stroke="#dcd6e4" strokeWidth="2.9" strokeLinecap="round" strokeLinejoin="round" />
  </svg>
);
const DialIcon = () => (
  <svg width="30" height="28" viewBox="-15 -15 30 28" fill="none" stroke="#77777f">
    <circle r="7.6" cy="1" strokeWidth="1.6" />
    <path d="M0-6V1" strokeWidth="1.6" />
    <g fill="#77777f" stroke="none">
      {[[0, -12], [-9.4, -8.6], [9.4, -8.6], [-12.8, 1], [12.8, 1], [-9.4, 10.4], [9.4, 10.4]].map(([x, y]) => <circle key={`${x},${y}`} cx={x} cy={y} r="1.15" />)}
    </g>
  </svg>
);
const EndIcon = () => (
  <svg width="27" height="27" viewBox="0 0 27 27" fill="none" stroke="currentColor" strokeWidth="2.1" strokeLinecap="round"><circle cx="13.5" cy="13.5" r="12" /><path d="M9.3 9.3l8.4 8.4M17.7 9.3l-8.4 8.4" /></svg>
);
const Pencil = () => (
  <svg width="18" height="18" viewBox="0 0 18 18" fill="none" stroke="#a9a9af" strokeLinecap="round"><path d="M1 17 13.6 4.4" strokeWidth="2.2" /><path d="M16 1.9l.3-.3" strokeWidth="2.4" /></svg>
);

/* ---------- composition ---------- */
const Digits = ({ children }: { children: string }) => (
  <span>{children.split("").map((ch, i) => (ch === "1" ? <SlabOne key={i}>1</SlabOne> : ch))}</span>
);

const navIcons = [FlameIcon, HouseIcon, CalendarIcon, ClockIcon, TrendIcon, BooksIcon, CupIcon, WeightIcon];
const sliders = [
  { name: "Gas", icon: <GasIcon />, c: "#dc524c", bg: "#decbcd", values: ["0.00", "0.10", "0.50", "1.00", "1.50", "2.50"], on: "1.00" },
  { name: "Air", icon: <WindIcon />, c: "#4ba5d5", bg: "#c8d4dc", values: ["0", "20", "40", "60", "100"] },
  { name: "Drum", icon: <TurnIcon />, c: "#82828b", bg: "#cfced3", values: ["0", "25", "50", "75", "100"] },
];

export default function App() {
  return (
    <Desktop>
      <Global />
      <WindowShadow>
        <Window>
          <Side>
            <SideCap />
            <SideBody>
              <Brand><LogoIcon /></Brand>
              <Nav>
                {navIcons.map((Icon, i) => <NavItem key={i} $on={i === 0}><Icon /></NavItem>)}
              </Nav>
              <NavFoot>
                <NavItem><UserIcon /></NavItem>
                <NavItem><CpuIcon /></NavItem>
                <NavItem><BsGear size={32} /></NavItem>
                <Status />
              </NavFoot>
            </SideBody>
          </Side>

          <Main>
            <Panel>
              <RoastChart />
              <Tools>
                <SeriesBtn><SeriesIcon />Series<Chevron /></SeriesBtn>
                <ZoomBtn><Lens />Zoom</ZoomBtn>
              </Tools>
              <OrderCard>
                <OrderNo>PO-2610-045</OrderNo>
                <OrderName>Brazil Cerrado Natural — Fazenda Santa Lu…</OrderName>
                <OrderTarget>Target: <span>Dark</span></OrderTarget>
              </OrderCard>
            </Panel>
            <Legend>
              <LegendTitle>CONTROLS</LegendTitle>
              <LegendItem $c="#cb7b2e" $w={79}>Gas</LegendItem>
              <LegendItem $c="#698aea" $w={70}>Air</LegendItem>
              <LegendItem $c="#52525a" $w={80}>Drum</LegendItem>
            </Legend>
            <ControlsChart />
            <PhaseBar>Drying<b>5:21</b><small>100%</small></PhaseBar>
            <Dock>
              <Sliders>
                {sliders.map((s) => (
                  <SliderRow key={s.name} $c={s.c}>
                    <SliderName>{s.icon}{s.name}</SliderName>
                    {s.values.map((v) => <Chip key={v} $bg={s.bg} $on={v === s.on}>{v}</Chip>)}
                  </SliderRow>
                ))}
              </Sliders>
              <Actions>
                <ActionRow>
                  <EventBtn $bg="#e0e7e9" $b="#bfdcd8" $dim><TpIcon />TP</EventBtn>
                  <EventBtn $bg="#e4dfdb" $b="#d8bd92"><SunIcon />Yellow</EventBtn>
                  <EventBtn $bg="#eae6dc" $b="#ecd59b"><Ring c="#eab643" label="1" />FC</EventBtn>
                  <EventBtn $bg="#dfd3d4" $b="#c98d8c"><Ring c="#982723" label="2" />SC</EventBtn>
                  <EventBtn $bg="#dcd6e4" $b="#b79ad8"><CheckDisc />Drop</EventBtn>
                  <EventBtn $bg="#e2dbe8" $b="#d2aee6"><Ring c="#bd6be3" />Event</EventBtn>
                  <Toggle>
                    <ToggleCell><DialIcon /></ToggleCell>
                    <ToggleCell $on><Knobs><i /><i /><i /><i /><i /><i /></Knobs></ToggleCell>
                  </Toggle>
                </ActionRow>
                <ActionRow>
                  <TextBtn $bg="#d5d6d8" $c="#1c1c1e" $w={169} $h={50}><SquarePen size={28} strokeWidth={1.8} />Notes</TextBtn>
                  <Rule />
                  <TextBtn $bg="#e5dee0" $c="#cb3731" $w={216} $h={48}><EndIcon />End Roast</TextBtn>
                </ActionRow>
              </Actions>
            </Dock>
          </Main>

          <Readouts>
            <ReadBody>
              <Group $h={158}>
                <Reading $h={156}><Cap>TIME</Cap><ValueBox $c="#3b7879" $size={95} $track={-0.012}><Digits>5:21</Digits></ValueBox></Reading>
              </Group>
              <Group $h={314}>
                <Reading $h={156}><Cap>BT</Cap><ValueBox $c="#4ea156" $size={95}><Digits>163.5</Digits><small>°C</small></ValueBox></Reading>
                <Reading $h={156}><Cap>ET</Cap><ValueBox $c="#cb3a31" $size={95}><Digits>188.7</Digits><small>°C</small></ValueBox></Reading>
              </Group>
              <Group $h={222}>
                <Reading $h={110}><Cap>ΔBT</Cap><ValueBox $c="#3a63e4" $size={72}><Digits>9.2</Digits><small>°/min</small></ValueBox></Reading>
                <Reading $h={110}><Cap>Δ TARGET</Cap><ValueBox $c="#73737c" $size={60}><strong>—</strong></ValueBox></Reading>
              </Group>
              <HeadRow $h={68}><Cap>EVENTS</Cap><span>5</span></HeadRow>
              <ChargeRow>
                <ChargeCap>CHARGE</ChargeCap>
                <Setting $c="#dc524c" $w={89} $t={46}><span>Gas</span><b>1</b></Setting>
                <Setting $c="#4ba5d5" $w={99} $t={36}><span>Air</span><b>40</b></Setting>
                <Setting $c="#82828b" $w={100} $t={43}><span>Drum</span><b>50</b></Setting>
              </ChargeRow>
              <EventRow $c="#4d80f0"><b>Charge</b><span>0:00</span><em>ET 182°</em><Pencil /></EventRow>
              <EventRow $c="#55b5a5"><b>TP</b><span>0:30</span><em>91°</em><Pencil /></EventRow>
              <Phases>
                <PhaseHead $h={62}><PhaseCap>PHASES</PhaseCap><PhaseTotal>5:21</PhaseTotal></PhaseHead>
                <PhaseRow $c="#fcf2cd" $d={16} $lead><b>Drying</b><span>100%</span><em>5:21</em></PhaseRow>
                <PhaseRow $c="#f4d35f" $d={13} $on><b>Browning</b><span>0%</span><em>0:00</em></PhaseRow>
                <PhaseRow $c="#cb7b2e" $d={16}><b>Finish</b><span>0%</span><em>0:00</em></PhaseRow>
              </Phases>
            </ReadBody>
          </Readouts>

          <Lights>
            <Light $c="#ee6868" $b="#e04545" />
            <Light $c="#f4cb47" $b="#e6b92a" />
            <Light $c="#66c466" $b="#45ae47" />
          </Lights>
        </Window>
      </WindowShadow>
    </Desktop>
  );
}
